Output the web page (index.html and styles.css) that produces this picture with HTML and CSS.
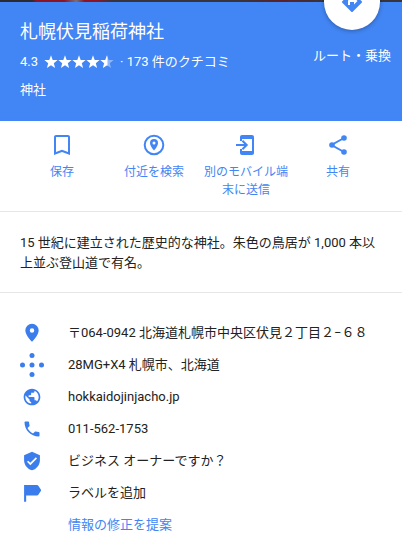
FILE: index.html
```html
<!DOCTYPE html>
<html lang="ja">
<head>
<meta charset="utf-8">
<meta name="viewport" content="width=device-width, initial-scale=1">
<title>札幌伏見稲荷神社</title>
<link rel="stylesheet" href="styles.css">
</head>
<body>
<main class="panel">
  <div class="photo"></div>
  <header class="header">
    <div class="summary">
      <h1 class="title">札幌伏見稲荷神社</h1>
      <div class="rating">
        <span>4.3</span>
        <svg class="stars" viewBox="0 0 70 14" aria-hidden="true">
          <defs><path id="star" d="M7 .3l1.700 4.600 4.900.2-3.800 3.100 1.300 4.800L7 10.300l-4.100 2.700 1.300-4.800L.4 5.100l4.900-.2z"/><clipPath id="half"><path d="M0 0h7.500v14H0z"/></clipPath></defs>
          <use href="#star"/><use href="#star" x="14"/><use href="#star" x="28"/><use href="#star" x="42"/>
          <use href="#star" x="56" opacity=".4"/><g transform="translate(56)"><use href="#star" clip-path="url(#half)"/></g>
        </svg>
        <a class="reviews" href="#reviews">· 173 件のクチコミ</a>
      </div>
      <a class="category" href="#category">神社</a>
    </div>
    <button class="route" type="button">
      <span class="route-disc"><svg class="route-icon" viewBox="0 0 24 24" aria-hidden="true"><path d="M21.710 11.290l-9-9a1 1 0 0 0-1.410 0l-9 9a1 1 0 0 0 0 1.410l9 9c.39.39 1.020.39 1.410 0l9-9a1 1 0 0 0 0-1.410zM14 14.500V12h-4v3H8v-4c0-.55.45-1 1-1h5V7.500l3.500 3.500-3.500 3.500z"/></svg></span>
      ルート・乗換
    </button>
  </header>

  <nav class="actions">
    <button class="action" type="button">
      <svg class="icon" viewBox="0 0 24 24" aria-hidden="true"><path d="M18 2H6c-1.100 0-2 .9-2 2v18l8-3 8 3V4c0-1.100-.9-2-2-2zm0 17l-6-2.300L6 19V4h12z"/></svg>
      保存
    </button>
    <button class="action" type="button">
      <svg class="icon" viewBox="0 0 24 24" aria-hidden="true"><circle cx="12" cy="12" r="9.300" fill="none" stroke="currentColor" stroke-width="2"/><path fill-rule="evenodd" d="M12 6a4 4 0 0 0-4 4c0 3 4 7.500 4 7.500s4-4.500 4-7.500a4 4 0 0 0-4-4zm0 2.500a1.500 1.500 0 1 1 0 3 1.500 1.500 0 0 1 0-3z"/></svg>
      付近を検索
    </button>
    <button class="action" type="button">
      <svg class="icon" viewBox="0 0 24 24" aria-hidden="true"><path d="M18 2H8c-1.100 0-2 .9-2 2v4h2V6h10v12H8v-2H6v4c0 1.100.9 2 2 2h10c1.100 0 2-.9 2-2V4c0-1.100-.9-2-2-2z"/><path d="M2 11h8.200L7.700 8.400 9.100 7l5 5-5 5-1.400-1.400 2.500-2.600H2z"/></svg>
      別のモバイル端末に送信
    </button>
    <button class="action" type="button">
      <svg class="icon" viewBox="0 0 24 24" aria-hidden="true"><path d="M18 5L5.500 12 18 19" fill="none" stroke="currentColor" stroke-width="2"/><circle cx="18" cy="5" r="2.800"/><circle cx="6" cy="12" r="2.800"/><circle cx="18" cy="19" r="2.800"/></svg>
      共有
    </button>
  </nav>

  <p class="description">15 世紀に建立された歴史的な神社。朱色の鳥居が 1,000 本以上並ぶ登山道で有名。</p>

  <ul class="details">
    <li class="row">
      <svg class="icon" viewBox="0 0 24 24" aria-hidden="true"><path fill-rule="evenodd" d="M12 1a8 8 0 0 0-8 8c0 5.700 8 13.500 8 13.500s8-7.800 8-13.500a8 8 0 0 0-8-8zm0 5.300a2.700 2.700 0 1 1 0 5.400 2.700 2.700 0 0 1 0-5.400z"/></svg>
      <span>〒064-0942 北海道札幌市中央区伏見２丁目２−６８</span>
    </li>
    <li class="row">
      <svg class="icon plus-code" viewBox="0 0 24 24" aria-hidden="true"><circle cx="12" cy="2.500" r="2.500"/><circle cx="2.500" cy="12" r="2.500"/><circle cx="12" cy="12" r="2.500"/><circle cx="21.500" cy="12" r="2.500"/><circle cx="12" cy="21.500" r="2.500"/></svg>
      <span>28MG+X4 札幌市、北海道</span>
    </li>
    <li class="row">
      <svg class="icon" viewBox="0 0 24 24" aria-hidden="true"><path d="M12 2C6.480 2 2 6.480 2 12s4.480 10 10 10 10-4.480 10-10S17.520 2 12 2zm-1 17.930c-3.950-.49-7-3.850-7-7.930 0-.62.080-1.210.21-1.790L9 15v1c0 1.100.9 2 2 2v1.930zm6.900-2.540c-.26-.81-1-1.390-1.900-1.390h-1v-3c0-.55-.45-1-1-1H8v-2h2c.55 0 1-.45 1-1V7h2c1.100 0 2-.9 2-2v-.41c2.930 1.190 5 4.060 5 7.410 0 2.080-.8 3.970-2.100 5.390z"/></svg>
      <a href="#website">hokkaidojinjacho.jp</a>
    </li>
    <li class="row">
      <svg class="icon" viewBox="0 0 24 24" aria-hidden="true"><path d="M6.620 10.790c1.440 2.830 3.760 5.140 6.590 6.590l2.200-2.200c.27-.27.67-.36 1.020-.24 1.120.37 2.330.57 3.570.57.55 0 1 .45 1 1V20c0 .55-.45 1-1 1-9.390 0-17-7.610-17-17 0-.55.45-1 1-1h3.500c.55 0 1 .45 1 1 0 1.250.2 2.450.57 3.570.11.35.030.74-.25 1.020l-2.200 2.200z"/></svg>
      <span>011-562-1753</span>
    </li>
    <li class="row">
      <svg class="icon" viewBox="0 0 24 24" aria-hidden="true"><path fill-rule="evenodd" d="M12 1L2.500 5v6c0 5.550 4.100 10.740 9.500 12 5.400-1.260 9.500-6.450 9.500-12V5L12 1zm-2 16l-4-4 1.410-1.410L10 14.170l6.590-6.590L18 9l-8 8z"/></svg>
      <a href="#owner">ビジネス オーナーですか？</a>
    </li>
    <li class="row">
      <svg class="icon" viewBox="0 0 24 24" aria-hidden="true"><path d="M2.500 2.500h15.500q1 0 1.600.9l3 4.400q.5.900 0 1.800l-3 4.400q-.6.900-1.600.9H5v7.600H2.500z"/></svg>
      <a href="#label">ラベルを追加</a>
    </li>
    <li class="row row-suggest"><a href="#edit">情報の修正を提案</a></li>
  </ul>
</main>
</body>
</html>
```
FILE: styles.css
```css
* {
  box-sizing: border-box;
}

body {
  margin: 0;
  background: #fff;
  color: #222;
  font: 13px/20px Roboto, "Noto Sans CJK JP", sans-serif;
  font-weight: 400;
}

.panel {
  overflow: hidden;
}

a {
  color: inherit;
  text-decoration: none;
}

button {
  border: 0;
  background: none;
  font: inherit;
  cursor: pointer;
}

svg {
  display: block;
  fill: currentColor;
}

.photo {
  height: 2px;
  background: linear-gradient(90deg, #2b2b30 0 8%, #8c1525 9% 16%, #77717a 19%, #8c1525 21% 24%, #38343a 28% 60%, #5c2029 70%, #38343a 80%);
}

.header {
  display: flex;
  justify-content: space-between;
  align-items: flex-start;
  padding: 18px 11px 21px 20px;
  background: #4285f4;
  color: #fff;
}

.title {
  margin: 0 0 8px;
  font-size: 18px;
  line-height: 24px;
  font-weight: 400;
}

.rating {
  display: flex;
  align-items: center;
  margin-bottom: 8px;
}

.stars {
  width: 70px;
  height: 14px;
  margin: 0 6px 0 6px;
}

.category {
  display: block;
}

.route {
  position: relative;
  margin-top: 26px;
  padding: 0;
  color: inherit;
}

.route-disc {
  position: absolute;
  bottom: 36px;
  left: 50%;
  display: grid;
  place-items: center;
  width: 56px;
  height: 56px;
  margin-left: -28px;
  border-radius: 50%;
  background: #fff;
  box-shadow: 0 1px 4px rgba(0, 0, 0, 0.3);
  color: #4285f4;
}

.route-icon {
  width: 24px;
  height: 24px;
}

.actions {
  display: flex;
  padding: 12px 16px;
  border-bottom: 1px solid #e6e6e6;
}

.action {
  display: flex;
  flex: 0 1 92px;
  flex-direction: column;
  align-items: center;
  gap: 6px;
  padding: 0 4px;
  color: #4285f4;
  font-size: 12px;
  line-height: 18px;
}

.icon {
  flex: none;
  width: 24px;
  height: 24px;
}

.description {
  margin: 0;
  padding: 21px 20px 19px;
  border-bottom: 1px solid #e6e6e6;
}

.details {
  margin: 0;
  padding: 24px 20px;
  list-style: none;
}

.row {
  display: flex;
  align-items: center;
  gap: 24px;
  height: 32px;
}

.row .icon {
  width: 20px;
  height: 20px;
  margin: 0 2px;
  color: #3b7ded;
}

.row .plus-code {
  width: 24px;
  height: 24px;
  margin: 0;
}

.row-suggest {
  padding-left: 48px;
  color: #4285f4;
}
```
